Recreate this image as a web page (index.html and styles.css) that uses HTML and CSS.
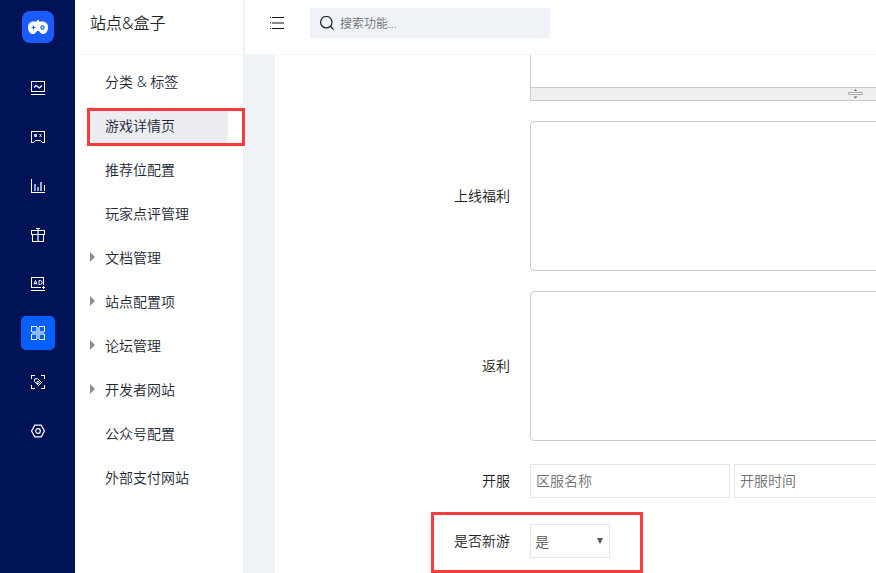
FILE: index.html
```html
<!DOCTYPE html>
<html lang="zh-CN">
<head>
    <meta charset="UTF-8">
    <meta name="viewport" content="width=device-width, initial-scale=1.0">
    <title>游戏详情页</title>
    <link rel="stylesheet" href="styles.css">
</head>
<body>
    <nav class="rail">
        <a class="logo" href="#" aria-label="首页">
            <svg width="20" height="15" viewBox="0 0 20 15">
                <path d="M9 0h2v1.500h3.500C18 1.500 20 4 20 7.500S18 14 15.500 14c-1.500 0-2.500-.5-3.300-1.500L11 11H9l-1.200 1.500C7 13.500 6 14 4.500 14 2 14 0 11 0 7.500S2 1.500 5.500 1.500H9z" fill="#fff"/>
                <path d="M5.500 5.500v4M3.500 7.500h4" stroke="#1a5cff" stroke-width="1.200"/>
                <circle cx="14.500" cy="7.500" r="1.600" fill="none" stroke="#1a5cff" stroke-width="1.200"/>
            </svg>
        </a>
        <a class="rail-item" href="#" aria-label="概览">
            <svg class="icon" viewBox="0 0 14 14">
                <path class="sharp" d="M.5.5h13v10H.5zM0 13.500h14"/>
                <path d="M3 6.500l2-2L8.500 7 11 4.500" stroke-width="1.300"/>
            </svg>
        </a>
        <a class="rail-item" href="#" aria-label="游戏">
            <svg class="icon" viewBox="0 0 14 14">
                <path class="sharp" d="M.5 12.500V1.500h13v11"/>
                <path d="M.5 12.500h2.300l1.700-2h5l1.700 2h2.300"/>
                <path d="M3.500 4.500h2v2h-2zM4.500 4v3M8.500 4l2 3M10.500 4l-2 3" opacity=".8"/>
            </svg>
        </a>
        <a class="rail-item" href="#" aria-label="统计">
            <svg class="icon" viewBox="0 0 14 14">
                <path class="sharp" d="M.5 0v13.500H14M13.500 6v6"/>
                <path d="M10 3v9" opacity=".65" stroke-width="2"/>
                <path d="M4 5v7" opacity=".6" stroke-width="2"/>
                <path d="M7 8v4" opacity=".6" stroke-width="2"/>
            </svg>
        </a>
        <a class="rail-item" href="#" aria-label="礼包">
            <svg class="icon" viewBox="0 0 14 14">
                <path class="sharp" d="M.5 2.500h13v4H.5zM1.500 6.500v7h11v-7M5 .5h4"/>
                <path d="M7 1v12" stroke-width="2" opacity=".6"/>
            </svg>
        </a>
        <a class="rail-item" href="#" aria-label="广告">
            <svg class="icon" viewBox="0 0 14 14">
                <path class="sharp" d="M12.500 8V.5H.5v10h9M0 13.500h14M11 10.500h3M12.500 9v3"/>
                <path d="M3 7.500l1.500-4L6 7.500M3.500 6.500h2M8 3.500h1.500l1.500 1v2l-1.500 1H8z"/>
            </svg>
        </a>
        <a class="rail-item active" href="#" aria-label="站点">
            <svg class="icon" viewBox="0 0 14 14">
                <path d="M7 1v12M1 7h4.500M8.500 7H13" stroke-width="3" opacity=".55"/>
                <path class="sharp" d="M.5 0v6M.5 8v6M13.500 0v6M13.500 8v6M0 .5h6M8 .5h6M0 13.500h6M8 13.500h6"/>
                <path class="sharp" d="M5.500 1v4.500H1M8.500 1v4.500H13M5.500 13V8.500H1M8.500 13V8.500H13" opacity=".4"/>
            </svg>
        </a>
        <a class="rail-item" href="#" aria-label="推广">
            <svg class="icon" viewBox="0 0 14 14">
                <path class="sharp" d="M.5 4V.5H4M10 .5h3.500V4M13.500 10v3.500H10M4 13.500H.5V10"/>
                <path d="M3.500 4l3-.5 4 4-3 3-4-4zM6 7a1.200 1.200 0 1 0 2 0 1.200 1.200 0 0 0-2 0"/>
            </svg>
        </a>
        <a class="rail-item" href="#" aria-label="设置">
            <svg class="icon" viewBox="0 0 14 14">
                <path d="M3.800 1.200h6.400L13.400 7l-3.200 5.800H3.800L.6 7z" stroke-width="1.200"/>
                <circle cx="7" cy="7" r="2.300" stroke-width="1.200"/>
            </svg>
        </a>
    </nav>

    <aside class="side">
        <h1 class="side-title">站点&amp;盒子</h1>
        <ul class="menu">
            <li><a href="#">分类 &amp; 标签</a></li>
            <li class="marked"><a class="active" href="#">游戏详情页</a></li>
            <li><a href="#">推荐位配置</a></li>
            <li><a href="#">玩家点评管理</a></li>
            <li><a class="parent" href="#">文档管理</a></li>
            <li><a class="parent" href="#">站点配置项</a></li>
            <li><a class="parent" href="#">论坛管理</a></li>
            <li><a class="parent" href="#">开发者网站</a></li>
            <li><a href="#">公众号配置</a></li>
            <li><a href="#">外部支付网站</a></li>
        </ul>
    </aside>

    <div class="page">
        <header class="topbar">
            <button class="toggle" type="button" aria-label="收起菜单">
                <svg width="14" height="14" viewBox="0 0 14 14">
                    <path d="M0 1.500h1M2 1.500h12M0 12.500h1M2 12.500h12" stroke="#111"/>
                    <path d="M0 7h1M2 7h12" stroke="#888" stroke-width="2"/>
                </svg>
            </button>
            <label class="search">
                <svg width="14" height="14" viewBox="0 0 14 14">
                    <path d="M10.500 10.500l3.200 3.200M12 6.200a5.700 5.700 0 1 0-11.400 0 5.700 5.700 0 0 0 11.400 0z" fill="none" stroke="#222" stroke-width="1.200"/>
                </svg>
                <input type="text" placeholder="搜索功能..." aria-label="搜索功能">
            </label>
        </header>

        <main class="content">
            <form class="form">
                <div class="editor">
                    <div class="editor-body"></div>
                    <div class="editor-resize">
                        <svg width="15" height="10" viewBox="0 0 15 10">
                            <path d="M6 2l1.500-2L9 2zM5.500 7.500h4l-2 2z" fill="#666"/>
                            <path d="M.5 3.500h14v2H.5z" fill="#fff" stroke="#aaa"/>
                        </svg>
                    </div>
                </div>
                <div class="row">
                    <label for="welfare">上线福利</label>
                    <textarea id="welfare"></textarea>
                </div>
                <div class="row">
                    <label for="rebate">返利</label>
                    <textarea id="rebate"></textarea>
                </div>
                <div class="row">
                    <label for="server">开服</label>
                    <div class="inputs">
                        <input id="server" type="text" placeholder="区服名称">
                        <input type="text" placeholder="开服时间" aria-label="开服时间">
                    </div>
                </div>
                <div class="row marked">
                    <label for="isNew">是否新游</label>
                    <div class="select">
                        <select id="isNew">
                            <option>是</option>
                            <option>否</option>
                        </select>
                    </div>
                </div>
            </form>
        </main>
    </div>
</body>
</html>
```
FILE: styles.css
```css
* {
    box-sizing: border-box;
}

body {
    display: flex;
    height: 100vh;
    margin: 0;
    overflow: hidden;
    background-color: #fff;
    color: #222;
    font-family: "Noto Sans", "Noto Sans CJK SC", sans-serif;
    font-size: 14px;
    font-weight: 350;
}

a {
    color: inherit;
    text-decoration: none;
}

input, select, textarea {
    font: inherit;
}

/* icon rail */
.rail {
    display: flex;
    flex: none;
    flex-direction: column;
    align-items: center;
    gap: 15px;
    width: 75px;
    padding-top: 11px;
    background-color: #001356;
}

.logo {
    display: flex;
    align-items: center;
    justify-content: center;
    width: 32px;
    height: 32px;
    margin-bottom: 13px;
    border-radius: 8px;
    background-color: #1a5cff;
}

.rail-item {
    display: flex;
    align-items: center;
    justify-content: center;
    width: 34px;
    height: 34px;
    border-radius: 5px;
}

.rail-item.active {
    background-color: #0560ff;
}

.icon {
    width: 14px;
    height: 14px;
    fill: none;
    stroke: #fff;
}

.sharp {
    shape-rendering: crispEdges;
}

/* side menu */
.side {
    flex: none;
    width: 170px;
    border-right: 2px solid #eff3f9;
}

.side-title {
    height: 55px;
    margin: 0;
    padding-left: 15px;
    border-bottom: 1px solid #eff6fc;
    font-size: 16px;
    font-weight: 350;
    line-height: 46px;
}

.menu {
    display: flex;
    flex-direction: column;
    gap: 10px;
    margin: 0;
    padding: 10px 15px;
    list-style: none;
}

.menu a {
    display: flex;
    align-items: center;
    height: 34px;
    padding-bottom: 2px;
    padding-left: 15px;
    border-radius: 5px;
    color: #1c2733;
}

.menu .active {
    background-color: #ebedf1;
}

.menu .parent {
    padding-left: 0;
}

.menu .parent::before {
    content: "";
    margin-right: 10px;
    border: 5px solid transparent;
    border-right: 0;
    border-left-color: #868e93;
}

/* red highlight frames */
.marked {
    position: relative;
}

.marked::after {
    content: "";
    position: absolute;
    box-sizing: border-box;
    border: 3px solid #fb3a3c;
    pointer-events: none;
}

.menu .marked::after {
    inset: -1px -17px -3px -3px;
}

.row.marked::after {
    top: -9px;
    bottom: -12px;
    left: 156px;
    width: 212px;
}

/* top bar */
.page {
    display: flex;
    flex: 1;
    flex-direction: column;
    min-width: 0;
}

.topbar {
    display: flex;
    flex: none;
    align-items: center;
    gap: 26px;
    height: 55px;
    padding: 0 25px 8px;
    border-bottom: 1px solid #eff6fc;
}

.toggle {
    display: flex;
    padding: 0;
    border: 0;
    background: none;
    cursor: pointer;
}

.search {
    display: flex;
    align-items: center;
    gap: 4px;
    width: 240px;
    height: 30px;
    padding-left: 10px;
    background-color: #eff2f7;
}

.search input {
    flex: 1;
    min-width: 0;
    border: 0;
    outline: 0;
    background: none;
    font-size: 12px;
}

::placeholder {
    color: #707070;
    opacity: 1;
}

/* form */
.content {
    flex: 1;
    min-height: 0;
    padding-left: 30px;
    overflow: hidden;
    background-color: #eff3f8;
}

.form {
    display: flex;
    flex-direction: column;
    gap: 20px;
    min-height: 100%;
    background-color: #fff;
}

.editor {
    width: 650px;
    margin-left: 255px;
    border: 1px solid #ccc;
    border-top: 0;
}

.editor-body {
    height: 32px;
}

.editor-resize {
    display: flex;
    align-items: center;
    justify-content: center;
    height: 13px;
    border-top: 1px solid #ccc;
    background-color: #efefef;
}

.row {
    display: flex;
    align-items: center;
    gap: 20px;
    min-height: 40px;
}

.row label {
    flex: none;
    width: 235px;
    padding-bottom: 2px;
    text-align: right;
}

.row textarea {
    flex: none;
    width: 650px;
    height: 150px;
    border: 1px solid #ccc;
    border-radius: 4px;
    resize: none;
}

.inputs {
    display: flex;
    gap: 4px;
}

.inputs input {
    flex: none;
    width: 200px;
    height: 34px;
    padding: 0 5px 2px;
    border: 1px solid #e6e6e6;
}

.select {
    display: flex;
    align-items: center;
    width: 80px;
    height: 34px;
    border: 1px solid #e6e6e6;
}

.select select {
    flex: 1;
    height: 32px;
    padding: 0 4px;
    border: 0;
    background: none;
    color: #555;
    appearance: none;
}

.select::after {
    content: "";
    margin: 0 6px 0 -13px;
    border: 3px solid transparent;
    border-top: 6px solid #555;
    border-bottom: 0;
    pointer-events: none;
}
```
